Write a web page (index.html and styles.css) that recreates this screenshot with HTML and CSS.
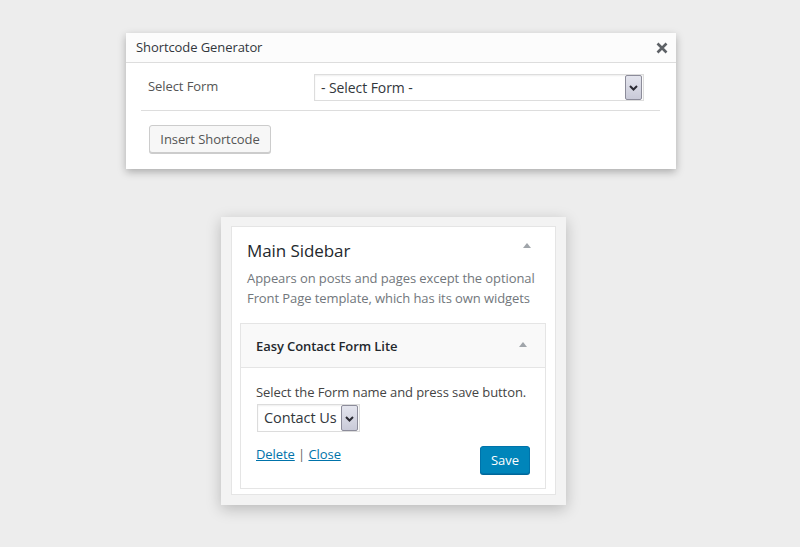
FILE: index.html
```html
<!DOCTYPE html>
<html>
<head>
<meta charset="utf-8">
<link rel="stylesheet" href="styles.css">
</head>
<body>
<div class="page">
  <div class="dialog">
    <div class="dialog-head">
      <span class="dialog-title">Shortcode Generator</span>
      <span class="close" aria-label="Close">
        <svg width="12" height="12" viewBox="0 0 12 12"><path d="M1.5 1.5 L10.5 10.5 M10.5 1.5 L1.5 10.5" stroke="#5d6166" stroke-width="2.6" stroke-linecap="butt"/></svg>
      </span>
    </div>
    <div class="dialog-body">
      <div class="form-row">
        <span class="label">Select Form</span>
        <div class="select select-wide">
          <span class="select-text">- Select Form -</span>
          <span class="select-btn"><svg width="9" height="6" viewBox="0 0 9 6"><path d="M1 1 L4.5 4.5 L8 1" fill="none" stroke="#2b2b33" stroke-width="2"/></svg></span>
        </div>
      </div>
      <div class="actions-row">
        <button class="btn">Insert Shortcode</button>
      </div>
    </div>
  </div>

  <div class="sidebar-frame">
    <div class="sidebar">
      <div class="sidebar-head">
        <h2 class="sidebar-name">Main Sidebar</h2>
        <span class="tri tri-main"></span>
      </div>
      <p class="sidebar-desc">Appears on posts and pages except the optional Front Page template, which has its own widgets</p>
      <div class="widget">
        <div class="widget-head">
          <span class="widget-title">Easy Contact Form Lite</span>
          <span class="tri"></span>
        </div>
        <div class="widget-body">
          <p class="widget-text">Select the Form name and press save button.</p>
          <div class="select select-small">
            <span class="select-text">Contact Us</span>
            <span class="select-btn"><svg width="9" height="6" viewBox="0 0 9 6"><path d="M1 1 L4.5 4.5 L8 1" fill="none" stroke="#2b2b33" stroke-width="2"/></svg></span>
          </div>
          <div class="widget-actions">
            <div class="links"><a href="#">Delete</a> <span class="sep">|</span> <a href="#">Close</a></div>
            <button class="btn-primary">Save</button>
          </div>
        </div>
      </div>
    </div>
  </div>
</div>
</body>
</html>
```

FILE: styles.css
```css
* { box-sizing: border-box; }
html, body { margin: 0; padding: 0; }
body {
  background: #ededed;
  font-family: "Open Sans", "Noto Sans", sans-serif;
  font-size: 13px;
  letter-spacing: -0.08px;
  color: #444;
  width: 800px;
  height: 547px;
  overflow: hidden;
}
.page {
  padding-top: 33px;
  display: flex;
  flex-direction: column;
}

/* dialog */
.dialog {
  margin-left: 126px;
  width: 550px;
  height: 136px;
  background: #fff;
  box-shadow: 0 3px 8px rgba(0,0,0,0.28);
}
.dialog-head {
  height: 30px;
  background: #fcfcfc;
  border-bottom: 1px solid #dddddd;
  display: flex;
  align-items: center;
  justify-content: space-between;
  padding: 0 8px 0 10px;
}
.dialog-title {
  line-height: 29px;
  color: #32373c;
  font-size: 13px;
}
.close { display: flex; width: 12px; height: 12px; margin-top: 1px; }

.dialog-body { padding: 0 16px 0 15px; }
.form-row {
  display: flex;
  align-items: flex-start;
  padding: 11px 16px 9px 7px;
  border-bottom: 1px solid #dddddd;
}
.label {
  width: 166px;
  line-height: 25px;
  color: #555;
}
.select {
  display: flex;
  align-items: center;
  background: #fff;
  border: 1px solid #dddddd;
  box-shadow: inset 0 1px 2px rgba(0,0,0,0.07);
  color: #32373c;
}
.select-wide {
  width: 330px;
  height: 27px;
  font-size: 14px;
}
.select-wide .select-text { flex: 1; padding-left: 6px; line-height: 25px; }
.select-btn {
  flex: none;
  width: 17px;
  height: 25px;
  border: 1px solid #8c8c9a;
  border-radius: 2px;
  background: linear-gradient(#e4e5ee, #c9cad8);
  display: flex;
  align-items: center;
  justify-content: center;
  margin-right: 1px;
}
.select-btn svg { margin-top: 1px; }

.actions-row { padding: 14px 0 0 8px; }
.btn {
  font-family: inherit;
  font-size: 13px;
  letter-spacing: -0.08px;
  white-space: nowrap;
  color: #555;
  background: #f7f7f7;
  border: 1px solid #cccccc;
  border-radius: 3px;
  box-shadow: 0 1px 0 #cccccc;
  height: 28px;
  width: 122px;
  padding: 0;
  line-height: 26px;
}

/* sidebar */
.sidebar-frame {
  margin: 48px 0 0 221px;
  width: 345px;
  height: 288px;
  background: #f3f3f3;
  padding: 9px 10px 10px 10px;
  box-shadow: 0 4px 14px rgba(0,0,0,0.22);
}
.sidebar {
  background: #fff;
  border: 1px solid #e5e5e5;
  height: 269px;
  padding: 11px 9px 0 8px;
}
.sidebar-head {
  display: flex;
  justify-content: space-between;
  align-items: flex-start;
  padding: 0 15px 0 7px;
}
.sidebar-name {
  margin: 1px 0 0 0;
  font-size: 17px;
  font-weight: 400;
  line-height: 24px;
  color: #23282d;
}
.tri {
  width: 0; height: 0;
  border-left: 4px solid transparent;
  border-right: 4px solid transparent;
  border-bottom: 5px solid #a0a5aa;
}
.tri-main { margin-top: 5px; }
.sidebar-desc {
  margin: 6px 0 15px 7px;
  line-height: 19.5px;
  color: #72777c;
  width: 300px;
}
.widget {
  border: 1px solid #e5e5e5;
  background: #fff;
}
.widget-head {
  height: 44px;
  background: #f9f9f9;
  border-bottom: 1px solid #e5e5e5;
  display: flex;
  align-items: center;
  justify-content: space-between;
  padding: 0 18px 0 15px;
}
.widget-title {
  font-weight: 600;
  color: #23282d;
  line-height: 43px;
  padding-top: 1px;
}
.widget-head .tri { margin-top: -3px; }
.widget-body { padding: 14px 15px 14px 15px; }
.widget-text {
  margin: 0;
  line-height: 20px;
  color: #444;
}
.select-small {
  margin: 2px 0 0 1px;
  width: 103px;
  height: 28px;
  font-size: 14.5px;
  border-color: #dcdcdc;
}
.select-small .select-text { flex: 1; padding-left: 6px; line-height: 26px; color: #32373c; white-space: nowrap; overflow: hidden; }
.select-small .select-btn { height: 26px; }

.widget-actions {
  margin-top: 13px;
  display: flex;
  justify-content: space-between;
  align-items: flex-start;
}
.links { line-height: 18px; }
.links a { color: #0073aa; text-decoration: underline; }
.sep { color: #666; }
.btn-primary {
  font-family: inherit;
  font-size: 13px;
  height: 28px;
  width: 50px;
  margin-top: 1px;
  color: #fff;
  background: #0085ba;
  border: 1px solid #0073aa;
  border-radius: 3px;
  box-shadow: 0 1px 0 #006799;
  padding: 0;
  line-height: 26px;
}
```
